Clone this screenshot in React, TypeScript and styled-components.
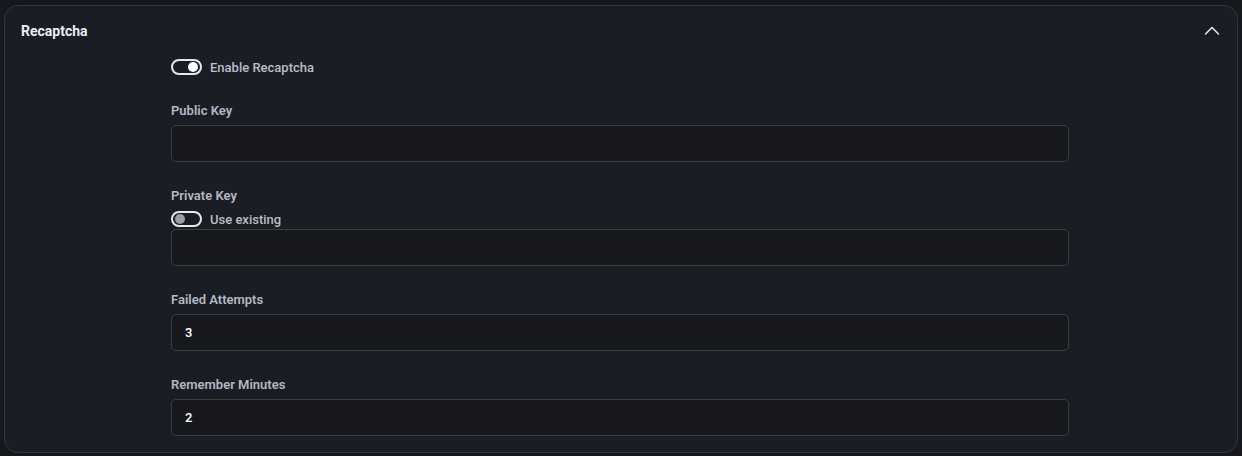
import { FC } from "react";
import styled, { createGlobalStyle } from "styled-components";

const GlobalStyle = createGlobalStyle`
  html, body {
    margin: 0;
    padding: 0;
    background: #16181d;
    font-family: Roboto, "Liberation Sans", Arial, sans-serif;
  }
  * { box-sizing: border-box; }
`;

type ToggleProps = { on?: boolean; label: string };

const Toggle: FC<ToggleProps> = ({ on, label }) => (
  <ToggleRow>
    <Track $on={on}>
      <Knob $on={on} />
    </Track>
    <ToggleLabel>{label}</ToggleLabel>
  </ToggleRow>
);

type FieldProps = { label: string; value?: string; toggle?: string };

const Field: FC<FieldProps> = ({ label, value, toggle }) => (
  <FieldBlock>
    <FieldLabel>{label}</FieldLabel>
    {toggle && (
      <FieldToggle>
        <Toggle label={toggle} />
      </FieldToggle>
    )}
    <Input defaultValue={value ?? ""} />
  </FieldBlock>
);

const App: FC = () => {
  return (
    <>
      <GlobalStyle />
      <Page>
        <Card>
          <Header>
            <Title>Recaptcha</Title>
            <svg width="18" height="18" viewBox="0 0 18 18" fill="none">
              <path d="M2.5 12L9 5.5L15.5 12" stroke="#dfe6f3" strokeWidth="1.6" strokeLinecap="round" strokeLinejoin="round" />
            </svg>
          </Header>
          <Body>
            <TopToggle>
              <Toggle on label="Enable Recaptcha" />
            </TopToggle>
            <Field label="Public Key" />
            <Field label="Private Key" toggle="Use existing" />
            <Field label="Failed Attempts" value="3" />
            <Field label="Remember Minutes" value="2" />
          </Body>
        </Card>
      </Page>
    </>
  );
};

export default App;

const Page = styled.div`
  width: 1242px;
  height: 456px;
  padding: 5px 4px 3px 4px;
`;

const Card = styled.div`
  width: 100%;
  height: 448px;
  background: #1b1d24;
  border: 1px solid #33363d;
  border-radius: 14px;
`;

const Header = styled.div`
  height: 50px;
  display: flex;
  align-items: center;
  justify-content: space-between;
  padding: 0 16px 0 16px;
`;

const Title = styled.span`
  font-size: 14px;
  font-weight: 700;
  color: #e8edf7;
`;

const Body = styled.div`
  width: 898px;
  margin-left: 166px;
  padding-top: 3px;
  display: flex;
  flex-direction: column;
  gap: 26px;
`;

const TopToggle = styled.div`
  margin-bottom: 2px;
`;

const ToggleRow = styled.div`
  display: flex;
  align-items: center;
  gap: 8px;
  height: 16px;
`;

const FieldToggle = styled.div`
  margin: 1px 0 2px;
`;

const Track = styled.div<{ $on?: boolean }>`
  width: 31px;
  height: 16px;
  border-radius: 8px;
  border: 2px solid #e6e8f0;
  display: flex;
  align-items: center;
  justify-content: ${(p) => (p.$on ? "flex-end" : "flex-start")};
  padding: 0 2px;
`;

const Knob = styled.div<{ $on?: boolean }>`
  width: 10px;
  height: 10px;
  border-radius: 50%;
  background: ${(p) => (p.$on ? "#ffffff" : "#9a9ea6")};
`;

const ToggleLabel = styled.span`
  font-size: 13px;
  font-weight: 500;
  color: #b9bec8;
`;

const FieldBlock = styled.div`
  display: flex;
  flex-direction: column;
`;

const FieldLabel = styled.label`
  font-size: 13px;
  font-weight: 600;
  line-height: 16px;
  color: #b3b9c4;
  margin-bottom: 6px;
`;

const Input = styled.input`
  width: 100%;
  height: 37px;
  background: #17181c;
  border: 1px solid #3a3d44;
  border-radius: 5px;
  padding: 0 13px;
  color: #ffffff;
  font-family: Roboto, "Liberation Sans", Arial, sans-serif;
  font-size: 13px;
  font-weight: 500;
  outline: none;
`;
